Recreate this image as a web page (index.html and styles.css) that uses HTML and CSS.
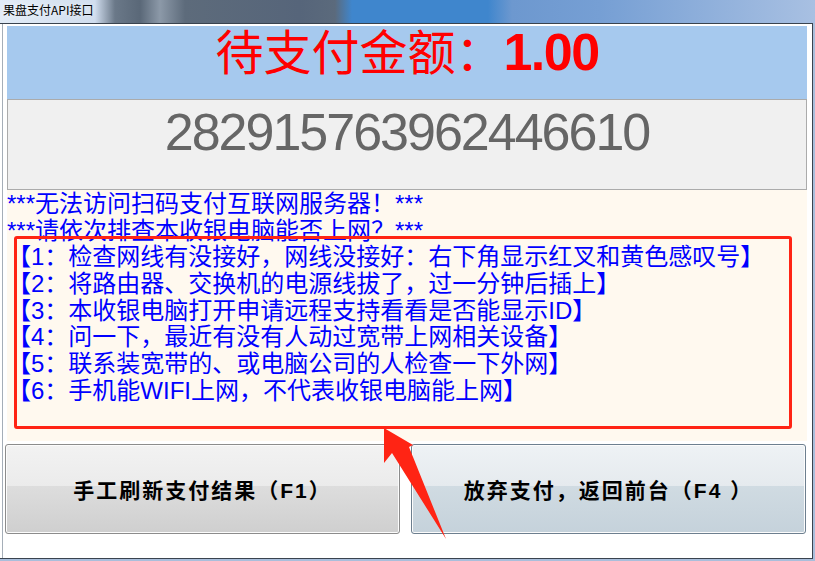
FILE: index.html
```html
<!DOCTYPE html>
<html lang="zh-CN">
<head>
    <meta charset="UTF-8">
    <title>果盘支付API接口</title>
    <link rel="stylesheet" href="styles.css">
</head>
<body>
    <div class="screen">
        <div class="titlebar">
            <span class="title">果盘支付API接口</span>
        </div>

        <div class="window">
            <div class="client">
                <div class="amount"><span class="amount-label">待支付金额：</span><span class="amount-value">1.00</span></div>

                <div class="order-no">282915763962446610</div>

                <div class="notes">
                    <div class="note">***无法访问扫码支付互联网服务器！***</div>
                    <div class="note">***请依次排查本收银电脑能否上网？***</div>
                    <div class="note">【1：检查网线有没接好，网线没接好：右下角显示红叉和黄色感叹号】</div>
                    <div class="note">【2：将路由器、交换机的电源线拔了，过一分钟后插上】</div>
                    <div class="note">【3：本收银电脑打开申请远程支持看看是否能显示ID】</div>
                    <div class="note">【4：问一下，最近有没有人动过宽带上网相关设备】</div>
                    <div class="note">【5：联系装宽带的、或电脑公司的人检查一下外网】</div>
                    <div class="note">【6：手机能WIFI上网，不代表收银电脑能上网】</div>
                </div>

                <div class="actions">
                    <button class="btn">手工刷新支付结果（F1）</button>
                    <button class="btn btn-hover">放弃支付，返回前台（F4 ）</button>
                </div>
            </div>
        </div>

        <!-- red annotation drawn over the screenshot -->
        <div class="mark-box"></div>
        <svg class="mark-arrow" width="72" height="120" viewBox="0 0 72 120">
            <polygon points="4,4 33,21 29,23 66,115 12,29 4,39" fill="#ff2414"/>
        </svg>
    </div>
</body>
</html>
```

FILE: styles.css
```css
body {
    margin: 0;
    background: #a9bedb;
    font-family: "Liberation Sans", "Noto Sans CJK SC", sans-serif;
}
.screen {
    position: relative;
    width: 815px;
    height: 561px;
    overflow: hidden;
}
.titlebar {
    height: 23px;
    background: linear-gradient(to right,
        #e2ecf7 0, #d0ddee 95px, #6a7888 115px, #5a6878 140px,
        #8c99a8 160px, #5d6b7b 185px, #56657a 300px, #5b6a7c 335px,
        #3f86cd 352px, #3f86cd 488px, #6d98cf 512px, #769fd4 600px,
        #a8c0e2 815px);
}
.title {
    display: block;
    padding-left: 3px;
    font-family: "Noto Sans CJK SC", sans-serif;
    font-size: 12px;
    line-height: 20px;
    color: #000;
    text-shadow: 0 0 6px rgba(255,255,255,0.9);
}
.window {
    width: 813px;
    height: 536px;
    box-sizing: border-box;
    border: 1px solid #39434f;
    border-left: 0;
    background: #fff;
}
.client {
    height: 534px;
    margin-left: 2px;
    padding-top: 2px;
    box-sizing: border-box;
    border-left: 1px solid #a5aeb8;
}
.amount {
    width: 800px;
    height: 73px;
    margin-left: 4px;
    background: #a6c9ee;
    color: #ff0000;
    font-size: 52px;
    line-height: 52px;
    text-align: center;
    white-space: nowrap;
}
.amount-label {
    font-size: 48px;
}
.amount-value {
    font-weight: bold;
    letter-spacing: -1.5px;
}
.order-no {
    width: 800px;
    height: 91px;
    margin-left: 4px;
    padding-top: 6px;
    box-sizing: border-box;
    border: 1px solid #ababab;
    background: #f0f0f0;
    color: #666;
    font-size: 52px;
    line-height: 52px;
    letter-spacing: -2px;
    text-align: center;
}
.notes {
    width: 800px;
    height: 251px;
    margin-left: 4px;
    padding-top: 1px;
    box-sizing: border-box;
    background: #fff9ef;
    color: #0000ff;
    font-size: 24px;
    line-height: 26.67px;
    white-space: nowrap;
}
.actions {
    display: flex;
    gap: 11px;
    margin: 3px 0 0 2px;
}
.btn {
    width: 395px;
    height: 90px;
    padding: 0;
    border: 1px solid #8c8c8c;
    border-radius: 3px;
    background: linear-gradient(#f2f2f2, #ebebeb 47%, #dddddd 47%, #cfcfcf);
    box-shadow: inset 0 0 0 1px #fcfcfc;
    color: #000;
    font-family: "Liberation Sans", "Noto Sans CJK SC", sans-serif;
    font-size: 21px;
    font-weight: bold;
    letter-spacing: 2px;
}
.btn-hover {
    border-color: #6d7f8f;
    background: linear-gradient(#eef2f5, #e5eaee 47%, #d0dbe2 47%, #c5d2db);
}
.mark-box {
    position: absolute;
    left: 14px;
    top: 236px;
    width: 778px;
    height: 193px;
    box-sizing: border-box;
    border: 3px solid #ff2414;
    border-radius: 3px;
}
.mark-arrow {
    position: absolute;
    left: 380px;
    top: 424px;
}
```
